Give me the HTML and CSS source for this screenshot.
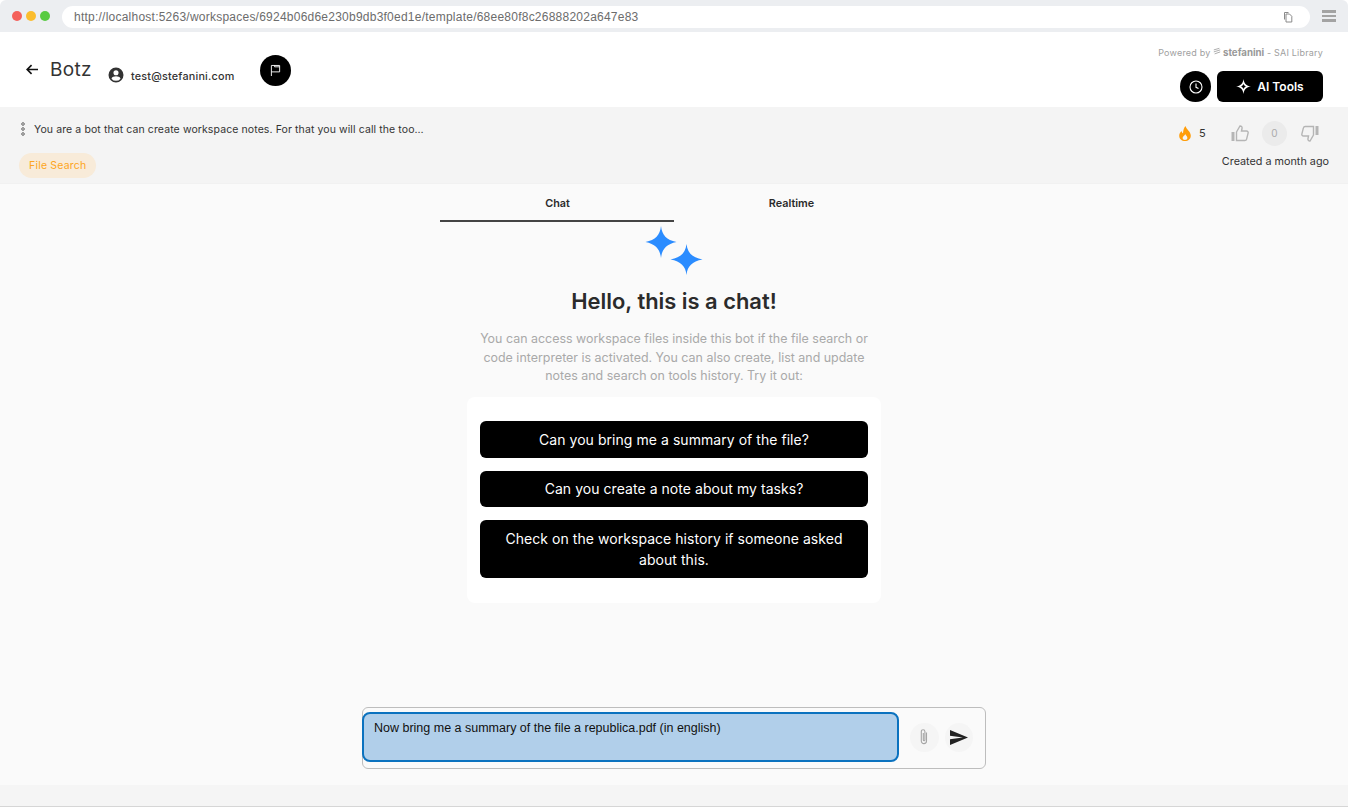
FILE: index.html
```html
<!DOCTYPE html>
<html lang="en">
<head>
<meta charset="utf-8">
<title>Botz</title>
<link rel="stylesheet" href="styles.css">
</head>
<body>
<div class="browser-bar">
  <div class="dots"><span class="dot red"></span><span class="dot yellow"></span><span class="dot green"></span></div>
  <div class="url">
    <span>http://localhost:5263/workspaces/6924b06d6e230b9db3f0ed1e/template/68ee80f8c26888202a647e83</span>
    <svg class="copy" viewBox="0 0 12 12" width="12" height="12" fill="none" stroke="#8a8a8a" stroke-width="1"><path d="M2.5 8.5V1.5H6.5"/><path d="M4 3H7.5L9.8 5.3V11H4Z" fill="#fff"/></svg>
  </div>
  <div class="menu"><i></i><i></i><i></i></div>
</div>

<header class="header">
  <div class="header-left">
    <svg class="back" viewBox="0 0 14 12" width="13" height="11" fill="none" stroke="#111" stroke-width="1.8"><path d="M13 6H1.5M6 1.2 1.2 6 6 10.8"/></svg>
    <h1 class="title">Botz</h1>
    <div class="user">
      <svg viewBox="0 0 24 24" width="18" height="18" fill="#333"><path d="M12 2a10 10 0 1 0 0 20 10 10 0 0 0 0-20Zm0 3.6a3.4 3.4 0 1 1 0 6.8 3.4 3.4 0 0 1 0-6.8Zm0 14.2a7.7 7.7 0 0 1-6-2.9c.1-2 4-3.1 6-3.1s5.900 1.100 6 3.100a7.700 7.700 0 0 1-6 2.900Z"/></svg>
      <span>test@stefanini.com</span>
    </div>
    <div class="round flag">
      <svg viewBox="0 0 12 14" width="11" height="13" fill="none" stroke="#fff" stroke-width="1"><path d="M1.500 13V1.500H10.500V8.500H1.500M5 1.500V3H10.500"/></svg>
    </div>
  </div>
  <div class="header-right">
    <div class="powered">Powered by
      <svg viewBox="0 0 10 10" width="8" height="9" fill="none" stroke="#aaa" stroke-width="1.200"><path d="M1 3 8 1M1 5.500 9 3M2 8 9 5.500"/></svg>
      <b>stefanini</b> - SAI Library</div>
    <div class="actions">
      <div class="round">
        <svg viewBox="0 0 14 14" width="14" height="14" fill="none" stroke="#fff" stroke-width="1.100"><circle cx="7" cy="7" r="6"/><path d="M7 3.500V7.300L9.500 8.500"/></svg>
      </div>
      <div class="ai-btn">
        <svg viewBox="0 0 16 16" width="15" height="15" fill="#fff"><path d="M8 0C8.600 4.700 11 7.300 16 8 11 8.700 8.600 11.300 8 16 7.400 11.300 5 8.700 0 8 5 7.300 7.400 4.700 8 0ZM8 5C7.700 6.500 6.500 7.700 5 8 6.500 8.300 7.700 9.500 8 11 8.300 9.500 9.500 8.300 11 8 9.500 7.700 8.300 6.500 8 5Z" fill-rule="evenodd"/></svg>
        <span>AI Tools</span>
      </div>
    </div>
  </div>
</header>

<section class="subbar">
  <div class="sub-left">
    <div class="desc">
      <svg viewBox="0 0 4 14" width="4" height="14" fill="none" stroke="#444" stroke-width="0.800"><circle cx="2" cy="2" r="1.300"/><circle cx="2" cy="7" r="1.300"/><circle cx="2" cy="12" r="1.300"/></svg>
      <span>You are a bot that can create workspace notes. For that you will call the too…</span>
    </div>
    <span class="chip">File Search</span>
  </div>
  <div class="sub-right">
    <div class="stats">
      <svg class="fire" viewBox="0 0 12 15" width="12" height="15"><path d="M6.500 0C7 3 11.800 5.500 11.800 9.700 11.800 12.800 9.300 15 6 15 2.700 15 .2 12.800 .2 9.700 .2 7.600 1.400 6 2.600 4.900 2.800 6 3.200 6.800 4 7.200 4.200 4.500 4.800 2 6.500 0Z" fill="#ff9d0a"/><path d="M6.300 8C6.500 9.300 8.400 10.200 8.400 12 8.400 13.300 7.300 14 6 14 4.700 14 3.600 13.200 3.600 12 3.600 10.500 5.600 9.700 6.300 8Z" fill="#f4f4f4"/></svg>
      <span class="fire-count">5</span>
      <svg class="thumb" viewBox="0 0 18 17" width="18" height="17" fill="none" stroke="#b5b5b5" stroke-width="1.400"><path d="M5.500 7 9 1c1.500 0 2.300 1 2 2.500L10.500 6H15.500c1.200 0 1.900 1 1.600 2.100l-1.500 6c-.2.900-.9 1.400-1.800 1.400H5.500Z"/><rect x=".5" y="7" width="3" height="9" fill="#b5b5b5" stroke="none"/></svg>
      <span class="count">0</span>
      <svg class="thumb" viewBox="0 0 18 17" width="18" height="17" fill="none" stroke="#b5b5b5" stroke-width="1.400"><path d="M12.500 10 9 16c-1.500 0-2.300-1-2-2.500L7.500 11H2.500c-1.200 0-1.900-1-1.600-2.100l1.500-6c.2-.9.900-1.400 1.800-1.400H12.500Z"/><rect x="14.500" y="1" width="3" height="9" fill="#b5b5b5" stroke="none"/></svg>
    </div>
    <div class="created">Created a month ago</div>
  </div>
</section>

<main class="main">
  <nav class="tabs">
    <div class="tab active">Chat</div>
    <div class="tab">Realtime</div>
  </nav>
  <svg class="stars" viewBox="0 0 58 49" width="58" height="49" fill="#2b8cff"><path d="M16 0C17 9 21.500 14 31.500 16 21.500 18 17 23 16 32 15 23 10.500 18 .5 16 10.500 14 15 9 16 0Z"/><path d="M41.500 18C42.500 27 47 31.500 57.500 33.500 47 35.500 42.500 40 41.500 49 40.500 40 36 35.500 25.500 33.500 36 31.500 40.500 27 41.500 18Z"/></svg>
  <h2 class="hello">Hello, this is a chat!</h2>
  <p class="intro">You can access workspace files inside this bot if the file search or code interpreter is activated. You can also create, list and update notes and search on tools history. Try it out:</p>
  <div class="card">
    <div class="prompt">Can you bring me a summary of the file?</div>
    <div class="prompt">Can you create a note about my tasks?</div>
    <div class="prompt">Check on the workspace history if someone asked about this.</div>
  </div>
  <div class="composer">
    <div class="input">Now bring me a summary of the file a republica.pdf (in english)</div>
    <div class="icon-btn">
      <svg viewBox="0 0 10 18" width="10" height="18" fill="none" stroke="#a5a5a5" stroke-width="1.100"><path d="M7.500 4.500V13a2.600 2.600 0 0 1-5.200 0V3.500a1.800 1.800 0 0 1 3.600 0V12a.8.8 0 0 1-1.600 0V5"/></svg>
    </div>
    <div class="icon-btn">
      <svg viewBox="0 0 18 15" width="18" height="15" fill="#222"><path d="M0 15 18 7.500 0 0V5.800L12.800 7.500 0 9.200Z"/></svg>
    </div>
  </div>
</main>
<footer class="footer"></footer>
</body>
</html>
```

FILE: styles.css
```css
* { box-sizing: border-box; }
html, body { margin: 0; height: 807px; overflow: hidden; }
body { font-family: Inter, "Liberation Sans", sans-serif; background: #fff; color: #222; display: flex; flex-direction: column; }

.browser-bar { height: 32px; flex: none; background: #eceef1; display: flex; align-items: center; padding: 0 12px; border-radius: 6px 6px 0 0; }
.dots { display: flex; gap: 4px; width: 50px; flex: none; }
.dot { width: 10px; height: 10px; border-radius: 50%; }
.red { background: #f4605a; }
.yellow { background: #fbbd2e; }
.green { background: #58cb42; }
.url { width: 1248px; flex: none; margin-top: 1px; height: 22px; background: #fff; border-radius: 11px; display: flex; align-items: center; justify-content: space-between; padding: 0 16px 0 12px; font-family: "Liberation Sans", sans-serif; font-size: 12px; color: #6c6c6c; letter-spacing: .235px; }
.menu { margin-left: 12px; display: flex; flex-direction: column; gap: 2px; }
.menu i { display: block; width: 14px; height: 2.500px; background: #a3a3a3; }

.header { height: 75px; flex: none; display: flex; justify-content: space-between; padding: 15px 25px 5px 26px; background: #fff; }
.header-left { display: flex; align-items: flex-start; }
.back { margin-top: 17px; }
.title { margin: 11px 0 0 11px; font-size: 19px; line-height: 24px; font-weight: 400; color: #333; letter-spacing: .3px; width: 58px; }
.user { display: flex; align-items: center; gap: 6px; height: 18px; margin-top: 19px; font-size: 10.800px; font-weight: 500; color: #333; line-height: 18px; letter-spacing: .2px; width: 152px; }
.user svg { margin-left: -1px; }
.user span { padding-top: 4px; }
.round { width: 31px; height: 31px; border-radius: 50%; background: #000; display: flex; align-items: center; justify-content: center; flex: none; }
.flag { margin-top: 8px; }
.header-right { display: flex; flex-direction: column; align-items: flex-end; }
.powered { height: 12px; font-size: 9px; line-height: 12px; color: #a0a0a0; margin-bottom: 12px; letter-spacing: .2px; white-space: nowrap; }
.powered svg { margin-right: -1px; }
.powered b { font-weight: 700; font-size: 9.700px; line-height: 1; letter-spacing: 0; color: #999; }
.actions { display: flex; gap: 6px; }
.ai-btn { width: 106px; height: 31px; border-radius: 6px; background: #000; color: #fff; display: flex; align-items: center; justify-content: center; gap: 6px; font-size: 12px; font-weight: 600; }

.subbar { height: 77px; flex: none; background: #f4f4f4; display: flex; justify-content: space-between; padding: 14px 19px 0 19px; border-bottom: 1px solid #f1f1f1; }
.sub-left { display: flex; flex-direction: column; align-items: flex-start; }
.desc { display: flex; align-items: center; gap: 9px; height: 16px; margin-bottom: 16px; font-size: 10.500px; color: #333; letter-spacing: .1px; padding-left: 2px; }
.chip { height: 25px; padding: 0 10px; border-radius: 13px; background: #f8ebd9; color: #fda521; font-size: 10.500px; line-height: 25px; letter-spacing: .2px; }
.sub-right { display: flex; flex-direction: column; align-items: flex-end; }
.stats { display: flex; align-items: center; height: 26px; margin: -1px 10px 0 0; }
.fire { margin-right: 8px; }
.fire-count { font-size: 11px; width: 32px; color: #333; }
.count { width: 25px; height: 25px; border-radius: 50%; background: #ebebeb; color: #aaa; font-size: 10px; line-height: 25px; text-align: center; margin: 0 14px 0 13px; }
.created { font-size: 10.800px; line-height: 14px; margin-top: 9px; color: #333; }

.main { flex: 1; background: #fafafa; display: flex; flex-direction: column; align-items: center; min-height: 0; }
.tabs { width: 468px; display: flex; flex: none; }
.tab { flex: 1; height: 38px; text-align: center; font-size: 10.800px; font-weight: 600; line-height: 40px; color: #2a2a2a; padding-left: 1px; }
.tab.active { border-bottom: 2px solid #444; }
.stars { flex: none; margin-top: 4px; display: block; }
.hello { margin: 13px 0 0; font-size: 21.900px; line-height: 26px; font-weight: 600; color: #2b2b2b; }
.intro { width: 410px; margin: 16px 0 0; font-size: 12.450px; line-height: 18.500px; color: #a9a9a9; text-align: center; }
.card { width: 414px; margin-top: 11.500px; padding: 24px 13px 25px; background: #fff; border-radius: 8px; display: flex; flex-direction: column; gap: 13px; flex: none; }
.prompt { background: #000; color: #fff; border-radius: 6px; padding: 7.750px 12px; font-size: 14px; line-height: 21px; text-align: center; letter-spacing: .05px; }
.composer { width: 624px; height: 62px; margin-top: 104.500px; border: 1px solid #bdbdbd; border-radius: 6px; display: flex; align-items: center; flex: none; background: #fafafa; padding-bottom: 2px; }
.input { width: 537px; height: 50px; margin-left: -1px; margin-right: 11px; background: #b1cfea; border: 2px solid #0b72bf; border-radius: 8px; padding: 7px 10px; font-family: "Liberation Sans", sans-serif; font-size: 12.500px; line-height: 15px; color: #111; flex: none; }
.icon-btn { width: 28.500px; height: 29px; border-radius: 50%; background: #f5f5f5; display: flex; align-items: center; justify-content: center; margin-right: 6px; flex: none; }
.footer { height: 22px; flex: none; background: #f5f5f5; border-bottom: 1px solid #d6d6d6; }
```
